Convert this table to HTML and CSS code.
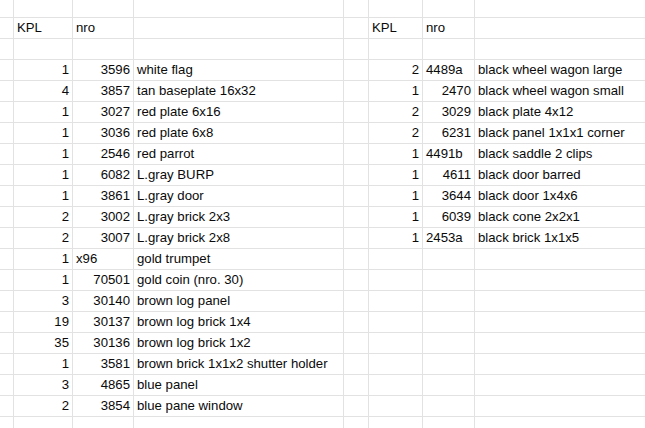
FILE: index.html
```html
<!DOCTYPE html>
<html>
<head>
<meta charset="utf-8">
<link rel="stylesheet" href="styles.css">
</head>
<body>
<div class="sheet">
  <div class="row top"><div class="c"></div><div class="c"></div><div class="c"></div><div class="c"></div><div class="c"></div><div class="c"></div><div class="c"></div><div class="c"></div></div>
  <div class="row"><div class="c"></div><div class="c">KPL</div><div class="c">nro</div><div class="c"></div><div class="c"></div><div class="c">KPL</div><div class="c">nro</div><div class="c"></div></div>
  <div class="row"><div class="c"></div><div class="c"></div><div class="c"></div><div class="c"></div><div class="c"></div><div class="c"></div><div class="c"></div><div class="c"></div></div>
  <div class="row"><div class="c"></div><div class="c r">1</div><div class="c r">3596</div><div class="c">white flag</div><div class="c"></div><div class="c r">2</div><div class="c">4489a</div><div class="c">black wheel wagon large</div></div>
  <div class="row"><div class="c"></div><div class="c r">4</div><div class="c r">3857</div><div class="c">tan baseplate 16x32</div><div class="c"></div><div class="c r">1</div><div class="c r">2470</div><div class="c">black wheel wagon small</div></div>
  <div class="row"><div class="c"></div><div class="c r">1</div><div class="c r">3027</div><div class="c">red plate 6x16</div><div class="c"></div><div class="c r">2</div><div class="c r">3029</div><div class="c">black plate 4x12</div></div>
  <div class="row"><div class="c"></div><div class="c r">1</div><div class="c r">3036</div><div class="c">red plate 6x8</div><div class="c"></div><div class="c r">2</div><div class="c r">6231</div><div class="c">black panel 1x1x1 corner</div></div>
  <div class="row"><div class="c"></div><div class="c r">1</div><div class="c r">2546</div><div class="c">red parrot</div><div class="c"></div><div class="c r">1</div><div class="c">4491b</div><div class="c">black saddle 2 clips</div></div>
  <div class="row"><div class="c"></div><div class="c r">1</div><div class="c r">6082</div><div class="c">L.gray BURP</div><div class="c"></div><div class="c r">1</div><div class="c r">4611</div><div class="c">black door barred</div></div>
  <div class="row"><div class="c"></div><div class="c r">1</div><div class="c r">3861</div><div class="c">L.gray door</div><div class="c"></div><div class="c r">1</div><div class="c r">3644</div><div class="c">black door 1x4x6</div></div>
  <div class="row"><div class="c"></div><div class="c r">2</div><div class="c r">3002</div><div class="c">L.gray brick 2x3</div><div class="c"></div><div class="c r">1</div><div class="c r">6039</div><div class="c">black cone 2x2x1</div></div>
  <div class="row"><div class="c"></div><div class="c r">2</div><div class="c r">3007</div><div class="c">L.gray brick 2x8</div><div class="c"></div><div class="c r">1</div><div class="c">2453a</div><div class="c">black brick 1x1x5</div></div>
  <div class="row"><div class="c"></div><div class="c r">1</div><div class="c">x96</div><div class="c">gold trumpet</div><div class="c"></div><div class="c"></div><div class="c"></div><div class="c"></div></div>
  <div class="row"><div class="c"></div><div class="c r">1</div><div class="c r">70501</div><div class="c">gold coin (nro. 30)</div><div class="c"></div><div class="c"></div><div class="c"></div><div class="c"></div></div>
  <div class="row"><div class="c"></div><div class="c r">3</div><div class="c r">30140</div><div class="c">brown log panel</div><div class="c"></div><div class="c"></div><div class="c"></div><div class="c"></div></div>
  <div class="row"><div class="c"></div><div class="c r">19</div><div class="c r">30137</div><div class="c">brown log brick 1x4</div><div class="c"></div><div class="c"></div><div class="c"></div><div class="c"></div></div>
  <div class="row"><div class="c"></div><div class="c r">35</div><div class="c r">30136</div><div class="c">brown log brick 1x2</div><div class="c"></div><div class="c"></div><div class="c"></div><div class="c"></div></div>
  <div class="row"><div class="c"></div><div class="c r">1</div><div class="c r">3581</div><div class="c">brown brick 1x1x2 shutter holder</div><div class="c"></div><div class="c"></div><div class="c"></div><div class="c"></div></div>
  <div class="row"><div class="c"></div><div class="c r">3</div><div class="c r">4865</div><div class="c">blue panel</div><div class="c"></div><div class="c"></div><div class="c"></div><div class="c"></div></div>
  <div class="row"><div class="c"></div><div class="c r">2</div><div class="c r">3854</div><div class="c">blue pane window</div><div class="c"></div><div class="c"></div><div class="c"></div><div class="c"></div></div>
  <div class="row"><div class="c"></div><div class="c"></div><div class="c"></div><div class="c"></div><div class="c"></div><div class="c"></div><div class="c"></div><div class="c"></div></div>
</div>
</body>
</html>
```

FILE: styles.css
```css
html, body {
  margin: 0;
  padding: 0;
  background: #fff;
  overflow: hidden;
}
.sheet {
  width: 645px;
  font-family: "Liberation Sans", Arial, sans-serif;
  font-size: 13.2px;
  color: #0a0a0a;
}
.row {
  display: grid;
  grid-template-columns: 14px 59px 61px 210px 25px 54px 52px 1fr;
  height: 21px;
}
.row.top {
  height: 18px;
}
.c {
  box-sizing: border-box;
  border-right: 1px solid #e2e2e2;
  border-bottom: 1px solid #e2e2e2;
  padding: 0 3px;
  line-height: 20px;
  white-space: nowrap;
  overflow: hidden;
}
.c:last-child {
  border-right: none;
}
.r {
  text-align: right;
}
```
